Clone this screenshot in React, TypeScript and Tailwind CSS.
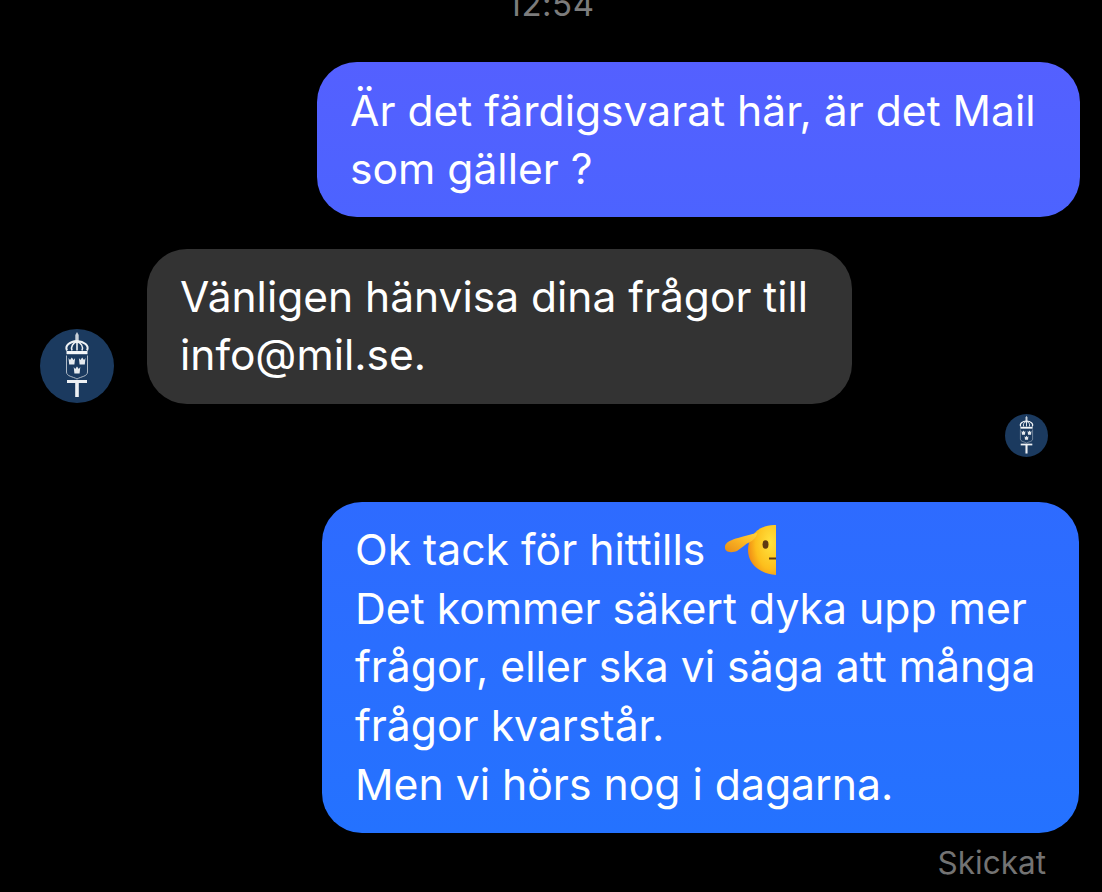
const FONT = "font-['Inter','Liberation_Sans',sans-serif]"

const Avatar = ({ size }: { size: 'lg' | 'sm' }) => {
  return (
    <svg
      viewBox="0 0 74 74"
      className={size === 'lg' ? 'w-[74px] h-[74px] shrink-0' : 'w-[43px] h-[43px] shrink-0'}
    >
      <circle cx="37" cy="37" r="37" fill="#1b3a5f" />
      {/* sword tip */}
      <path d="M35.3 6 L37 3 L38.7 6 V13 H35.3 Z" fill="#c8d0d9" />
      {/* crown */}
      <path
        d="M27 21.5 C24.5 16.5 30 12.5 37 12 C44 12.5 49.5 16.5 47 21.5"
        fill="#1b3a5f"
        stroke="#eef1f4"
        strokeWidth="2"
      />
      <path
        d="M32 21.5 C30.5 17.5 33 14 37 12.5 C41 14 43.5 17.5 42 21.5 M37 12.5 V21.5"
        stroke="#eef1f4"
        strokeWidth="1.6"
        fill="none"
      />
      <rect x="26.5" y="22" width="21" height="3.2" fill="#f4f6f8" />
      {/* shield */}
      <path
        d="M26.5 26.5 V43 C26.5 47.5 33 47.5 37 50 C41 47.5 47.5 47.5 47.5 43 V26.5"
        fill="none"
        stroke="#aeb9c5"
        strokeWidth="1"
      />
      {/* three crowns */}
      <path d="M28.5 29 L30 31 L31.8 28.5 L33.6 31 L35.1 29 L34.4 35.5 H29.2 Z" fill="#e6eaee" />
      <path d="M38.9 29 L40.4 31 L42.2 28.5 L44 31 L45.5 29 L44.8 35.5 H39.6 Z" fill="#e6eaee" />
      <path d="M33.7 38 L35.2 40 L37 37.5 L38.8 40 L40.3 38 L39.6 44.5 H34.4 Z" fill="#e6eaee" />
      {/* hilt */}
      <rect x="27" y="51" width="20" height="3" fill="#eef1f4" />
      <rect x="35.2" y="53" width="3.6" height="15" fill="#eef1f4" />
    </svg>
  )
}

const SaluteEmoji = () => {
  return (
    <svg viewBox="0 0 54 52" className="inline-block w-[54px] h-[52px] align-[-11px] ml-[7px]">
      <defs>
        <radialGradient id="face" cx="0.8" cy="0.35" r="0.95">
          <stop offset="0" stopColor="#ffe33f" />
          <stop offset="0.55" stopColor="#fdbf1c" />
          <stop offset="1" stopColor="#ea7412" />
        </radialGradient>
        <linearGradient id="hand" x1="0" y1="1" x2="1" y2="0">
          <stop offset="0" stopColor="#e88c16" />
          <stop offset="0.6" stopColor="#fdbb26" />
          <stop offset="1" stopColor="#ffd23c" />
        </linearGradient>
      </defs>
      <path d="M52 1 H50 C36 1 24 11 24 26 C24 40 36 50 52 51 Z" fill="url(#face)" />
      <path
        d="M1 22 C2 18 8 15.5 14 14 C21 12 27 10 33 9 C33 12 30 16 26 18 C21 20 18 24 13 27 C8 29 0 29 1 22 Z"
        fill="url(#hand)"
      />
      <ellipse cx="41.5" cy="20.5" rx="3" ry="4.2" fill="#5f3a12" />
      <rect x="45" y="33.5" width="7" height="2" fill="#5f3a12" />
    </svg>
  )
}

export default function App() {
  return (
    <div className={`${FONT} w-[1102px] h-[892px] overflow-hidden bg-black text-white antialiased flex flex-col`}>
      <div className="h-[16px] flex justify-center items-end mb-[46px]">
        <span className="text-[33px] leading-[40px] -mb-[8px] text-[#7c7c7c] tracking-[0.5px]">12:54</span>
      </div>

      <div className="flex justify-end pr-[22px]">
        <div className="w-[763px] h-[155px] rounded-[40px] bg-gradient-to-b from-[#5460ff] to-[#4c63ff] px-[33px] py-[20px] text-[42.6px] leading-[58px]">
          Är det färdigsvarat här, är det Mail
          <br />
          som gäller ?
        </div>
      </div>

      <div className="flex items-end pl-[40px] mt-[32px] gap-[33px]">
        <div className="mb-[1px]">
          <Avatar size="lg" />
        </div>
        <div className="w-[705px] h-[155px] rounded-[40px] bg-[#333333] px-[33px] py-[19px] text-[42.5px] leading-[58px]">
          Vänligen hänvisa dina frågor till
          <br />
          info@mil.se.
        </div>
      </div>

      <div className="flex justify-end pr-[54px] mt-[10px]">
        <Avatar size="sm" />
      </div>

      <div className="flex justify-end pr-[23px] mt-[45px]">
        <div className="w-[757px] h-[331px] rounded-[40px] bg-gradient-to-b from-[#2e6bff] to-[#2472ff] px-[33px] py-[19px] text-[42.7px] leading-[58.7px]">
          <div className="h-[58.7px]">
            Ok tack för hittills <SaluteEmoji />
          </div>
          Det kommer säkert dyka upp mer
          <br />
          frågor, eller ska vi säga att många
          <br />
          frågor kvarstår.
          <br />
          Men vi hörs nog i dagarna.
        </div>
      </div>

      <div className="flex justify-end pr-[56px] mt-[10px]">
        <span className="text-[31.5px] leading-[40px] text-[#737373]">Skickat</span>
      </div>
    </div>
  )
}
